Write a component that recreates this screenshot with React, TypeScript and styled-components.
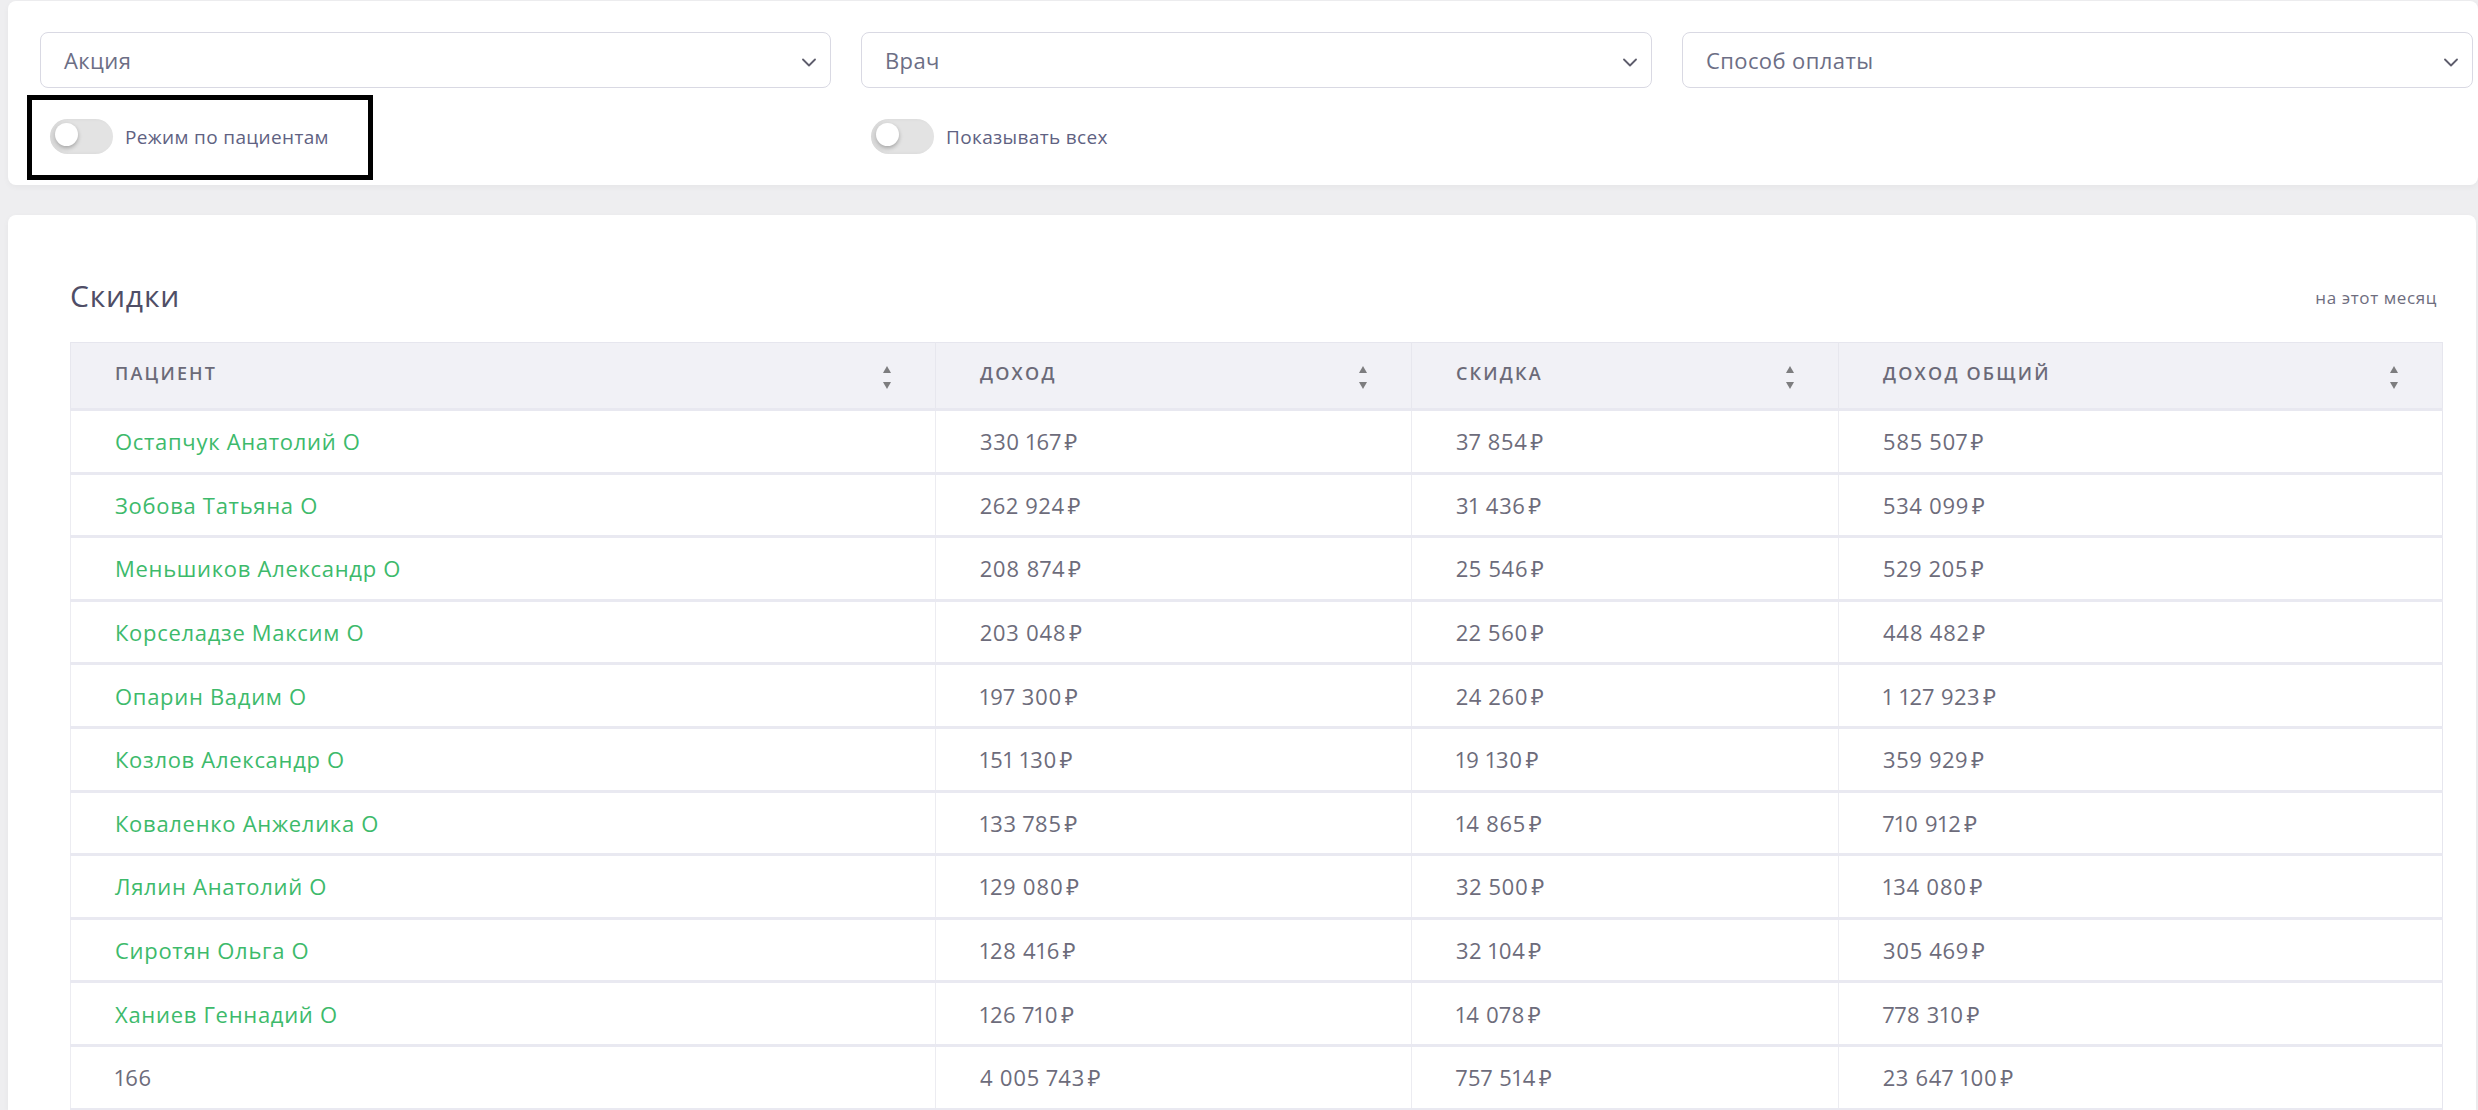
import React from 'react';
import styled, { createGlobalStyle } from 'styled-components';

const GlobalStyle = createGlobalStyle`
  html, body {
    margin: 0;
    padding: 0;
    background: #eeeef0;
    font-family: 'Open Sans', 'Noto Sans', sans-serif;
  }

  *, *::before, *::after {
    box-sizing: border-box;
  }
`;

type Row = {
  patient: string;
  income: string;
  discount: string;
  total: string;
};

const rows: Row[] = [
  { patient: 'Остапчук Анатолий О', income: '330 167', discount: '37 854', total: '585 507' },
  { patient: 'Зобова Татьяна О', income: '262 924', discount: '31 436', total: '534 099' },
  { patient: 'Меньшиков Александр О', income: '208 874', discount: '25 546', total: '529 205' },
  { patient: 'Корселадзе Максим О', income: '203 048', discount: '22 560', total: '448 482' },
  { patient: 'Опарин Вадим О', income: '197 300', discount: '24 260', total: '1 127 923' },
  { patient: 'Козлов Александр О', income: '151 130', discount: '19 130', total: '359 929' },
  { patient: 'Коваленко Анжелика О', income: '133 785', discount: '14 865', total: '710 912' },
  { patient: 'Лялин Анатолий О', income: '129 080', discount: '32 500', total: '134 080' },
  { patient: 'Сиротян Ольга О', income: '128 416', discount: '32 104', total: '305 469' },
  { patient: 'Ханиев Геннадий О', income: '126 710', discount: '14 078', total: '778 310' },
];

const columns = [
  { title: 'Пациент', width: 865 },
  { title: 'Доход', width: 476 },
  { title: 'Скидка', width: 427 },
  { title: 'Доход общий', width: 604 },
];

// narrow gap before the rouble sign, as in the design
const rub = (v: string) => `${v}\u200a₽`;

const Chevron = () => (
  <svg width='14' height='9' viewBox='0 0 14 9' fill='none'>
    <path d='M1 1.5 L7 7.5 L13 1.5' stroke='#5e5d6c' strokeWidth='1.8' strokeLinecap='round' strokeLinejoin='round' />
  </svg>
);

const SortIcon = () => (
  <svg width='8' height='24' viewBox='0 0 8 24'>
    <polygon points='4,0 8,7 0,7' fill='#7d7d7f' />
    <polygon points='0,16 8,16 4,23' fill='#7d7d7f' />
  </svg>
);

const App: React.FC = () => {
  return (
    <Page>
      <GlobalStyle />
      <FilterCard>
        <FilterGrid>
          <Select>
            <span>Акция</span>
            <Chevron />
          </Select>
          <Select>
            <span>Врач</span>
            <Chevron />
          </Select>
          <Select>
            <span>Способ оплаты</span>
            <Chevron />
          </Select>
        </FilterGrid>
        <ToggleGrid>
          <ToggleItem $highlighted>
            <Track>
              <Knob />
            </Track>
            <ToggleLabel>Режим по пациентам</ToggleLabel>
          </ToggleItem>
          <ToggleItem>
            <Track>
              <Knob />
            </Track>
            <ToggleLabel>Показывать всех</ToggleLabel>
          </ToggleItem>
        </ToggleGrid>
      </FilterCard>

      <TableCard>
        <CardHeader>
          <CardTitle>Скидки</CardTitle>
          <Period>на этот месяц</Period>
        </CardHeader>
        <Table>
          <colgroup>
            {columns.map((c) => (
              <col key={c.title} style={{ width: c.width }} />
            ))}
          </colgroup>
          <thead>
            <tr>
              {columns.map((c) => (
                <HeadCell key={c.title}>
                  <HeadInner>
                    <span>{c.title}</span>
                    <SortIcon />
                  </HeadInner>
                </HeadCell>
              ))}
            </tr>
          </thead>
          <tbody>
            {rows.map((r) => (
              <tr key={r.patient}>
                <Cell $link>{r.patient}</Cell>
                <Cell>{rub(r.income)}</Cell>
                <Cell>{rub(r.discount)}</Cell>
                <Cell>{rub(r.total)}</Cell>
              </tr>
            ))}
            <tr>
              <Cell>166</Cell>
              <Cell>{rub('4 005 743')}</Cell>
              <Cell>{rub('757 514')}</Cell>
              <Cell>{rub('23 647 100')}</Cell>
            </tr>
          </tbody>
        </Table>
      </TableCard>
    </Page>
  );
};

const Page = styled.div`
  padding: 1px 0 0 8px;
  height: 100vh;
  overflow: hidden;
`;

const FilterCard = styled.section`
  background: #fff;
  border-radius: 8px;
  box-shadow: 0 2px 6px rgba(0, 0, 0, 0.04);
  padding: 31px 5px 31px 32px;
`;

const FilterGrid = styled.div`
  display: grid;
  grid-template-columns: repeat(3, 1fr);
  column-gap: 30px;
`;

const Select = styled.div`
  height: 56px;
  border: 1px solid #d9d9e3;
  border-radius: 8px;
  background: #fff;
  display: flex;
  align-items: center;
  justify-content: space-between;
  padding: 0 14px 0 23px;
  font-size: 22px;
  letter-spacing: 0.4px;
  color: #6c6e85;

  svg {
    margin-top: 4px;
  }
`;

const ToggleGrid = styled.div`
  display: grid;
  grid-template-columns: repeat(3, 1fr);
  column-gap: 30px;
  margin-top: 31px;
`;

const ToggleItem = styled.div<{ $highlighted?: boolean }>`
  position: relative;
  display: flex;
  align-items: center;
  gap: 12px;
  margin-left: 10px;
  height: 35px;

  ${({ $highlighted }) =>
    $highlighted &&
    `
    &::after {
      content: '';
      position: absolute;
      top: -24px;
      left: -23px;
      width: 346px;
      height: 85px;
      border: 5px solid #000;
      pointer-events: none;
    }
  `}
`;

const Track = styled.div`
  position: relative;
  width: 63px;
  height: 35px;
  border-radius: 18px;
  background: #e3e3e3;
  box-shadow: inset 3px 0 4px rgba(0, 0, 0, 0.05);
  flex-shrink: 0;
`;

const Knob = styled.div`
  position: absolute;
  top: 4px;
  left: 5px;
  width: 23px;
  height: 23px;
  border-radius: 50%;
  background: #fff;
  box-shadow: 0 2px 4px rgba(0, 0, 0, 0.28);
`;

const ToggleLabel = styled.span`
  font-size: 19px;
  letter-spacing: 0.35px;
  color: #5f6282;
`;

const TableCard = styled.section`
  background: #fff;
  border-radius: 8px 8px 0 0;
  box-shadow: 0 2px 6px rgba(0, 0, 0, 0.04);
  margin: 30px 2px 0 0;
  padding: 60px 34px 0 62px;
`;

const CardHeader = styled.div`
  display: flex;
  justify-content: space-between;
  align-items: center;
  height: 40px;
  margin-bottom: 27px;
  padding-right: 5px;
`;

const CardTitle = styled.h2`
  margin: 0;
  font-size: 30px;
  font-weight: 400;
  letter-spacing: 0.8px;
  color: #4f4e66;
`;

const Period = styled.span`
  font-size: 17px;
  letter-spacing: 0.6px;
  color: #6e6d7e;
  margin-top: 4px;
`;

const Table = styled.table`
  width: 100%;
  table-layout: fixed;
  border-collapse: collapse;
  border: 1px solid #e6e6ee;
`;

const HeadCell = styled.th`
  height: 67px;
  padding: 0 44px;
  background: #f1f1f6;
  border-left: 1px solid #e7e7ee;
  border-bottom: 3px solid #e8e8f0;
  text-align: left;
`;

const HeadInner = styled.div`
  display: flex;
  align-items: center;
  justify-content: space-between;

  span {
    padding-bottom: 6px;
    font-size: 18px;
    font-weight: 600;
    letter-spacing: 2.2px;
    text-transform: uppercase;
    color: #6b6a78;
  }

  svg {
    margin-top: 4px;
  }
`;

const Cell = styled.td<{ $link?: boolean }>`
  height: 63.6px;
  padding: 0 44px;
  border-left: 1px solid #ececf1;
  border-bottom: 3px solid #e9e9f1;
  font-size: 22px;
  letter-spacing: 0.7px;
  font-variant-numeric: proportional-nums;
  color: ${({ $link }) => ($link ? '#3dba6b' : '#6d6c7b')};
  white-space: nowrap;
`;

export default App;
